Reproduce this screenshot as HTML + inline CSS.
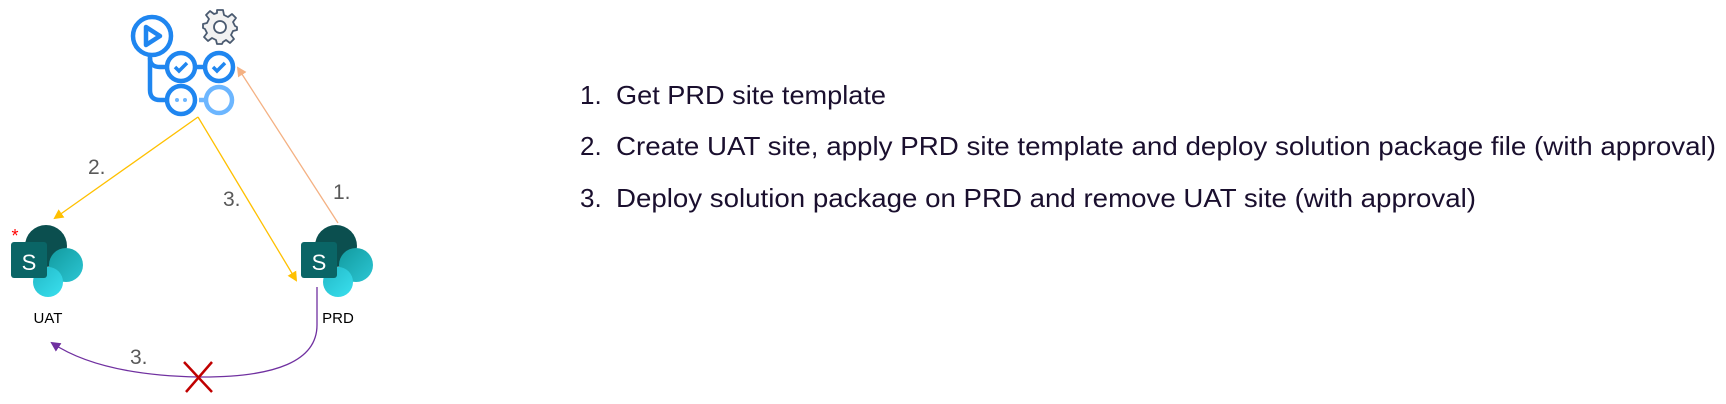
<!DOCTYPE html>
<html><head><meta charset="utf-8"><style>
html,body{margin:0;padding:0;background:#fff;}
svg{display:block}
</style></head><body>
<svg width="1726" height="404" viewBox="0 0 1726 404" xmlns="http://www.w3.org/2000/svg">
<defs>
<marker id="ay" markerWidth="10" markerHeight="10" refX="8" refY="5" orient="auto" markerUnits="userSpaceOnUse"><path d="M0,0 L10,5 L0,10 z" fill="#ffc000"/></marker>
<marker id="ao" markerWidth="10" markerHeight="10" refX="8" refY="5" orient="auto" markerUnits="userSpaceOnUse"><path d="M0,0 L10,5 L0,10 z" fill="#f4b183"/></marker>
<marker id="ap" markerWidth="10" markerHeight="10" refX="8" refY="5" orient="auto" markerUnits="userSpaceOnUse"><path d="M0,0 L10,5 L0,10 z" fill="#7030a0"/></marker>
<linearGradient id="gt" x1="0" y1="0" x2="1" y2="1"><stop offset="0" stop-color="#129a9e"/><stop offset="1" stop-color="#2cc6d4"/></linearGradient>
<linearGradient id="gc" x1="0" y1="0" x2="1" y2="1"><stop offset="0" stop-color="#22b8c6"/><stop offset="1" stop-color="#3ae0ef"/></linearGradient>
</defs>

<g fill="none" stroke="#1f86f0" stroke-width="4.5">
<circle cx="152" cy="36" r="19"/>
<path d="M146 27 L160 36 L146 45 Z" stroke-linejoin="round"/>
<path d="M150 55 V90 Q150 100 160 100 H167"/>
<path d="M150 58 V58 Q150 67 160 67 H167"/>
<circle cx="181" cy="67" r="14"/>
<path d="M175 67 L179 71 L187 63" stroke-width="3.5"/>
<line x1="195" y1="67" x2="205" y2="67"/>
<circle cx="219" cy="67" r="14"/>
<path d="M213 67 L217 71 L225 63" stroke-width="3.5"/>
<circle cx="181" cy="100" r="14"/>
</g>
<circle cx="177" cy="100" r="2" fill="#6cb6ff"/><circle cx="185" cy="100" r="2" fill="#6cb6ff"/>
<g fill="none" stroke="#6cb6ff" stroke-width="4.5"><line x1="199" y1="100" x2="205" y2="100"/><circle cx="219" cy="100" r="13"/></g>
<g transform="translate(220,27)" fill="#f2f2f2" stroke="#4a5a70" stroke-width="1.8">
<path d="M-3,-17 L3,-17 L4,-12 L8,-10 L12,-13 L16,-9 L13,-5 L15,-1 L17,0 L17,3 L13,4 L11,8 L14,12 L10,16 L6,13 L3,15 L2,17 L-3,17 L-4,13 L-8,11 L-12,14 L-16,10 L-13,6 L-15,2 L-17,1 L-17,-3 L-13,-4 L-11,-8 L-14,-12 L-10,-16 L-6,-13 L-3,-14 Z" stroke-linejoin="round"/>
<circle r="6" fill="#fff"/>
</g>

<line x1="198" y1="117" x2="55" y2="218" stroke="#ffc000" stroke-width="1.3" marker-end="url(#ay)"/>
<line x1="198" y1="117" x2="296" y2="280" stroke="#ffc000" stroke-width="1.3" marker-end="url(#ay)"/>
<line x1="338" y1="223" x2="238" y2="68" stroke="#f4b183" stroke-width="1.3" marker-end="url(#ao)"/>
<path d="M317 287 V325 Q317 378 198 377 Q100 375 52 343" fill="none" stroke="#7030a0" stroke-width="1.3" marker-end="url(#ap)"/>
<g stroke="#c00000" stroke-width="2.5"><line x1="184" y1="362" x2="212" y2="392"/><line x1="212" y1="362" x2="186" y2="392"/></g>

<g font-family="Liberation Sans, sans-serif" font-size="21" fill="#595959">
<text x="88" y="174">2.</text>
<text x="223" y="206">3.</text>
<text x="333" y="199">1.</text>
<text x="130" y="364">3.</text>
</g>

<g id="sp">
<circle cx="46" cy="246" r="21" fill="#0b4f4f"/>
<circle cx="66" cy="265" r="17" fill="url(#gt)"/>
<circle cx="48" cy="282" r="15" fill="url(#gc)"/>
<rect x="11" y="242" width="36" height="36" rx="3" fill="#0a6566"/>
<text x="29" y="270" font-family="Liberation Sans, sans-serif" font-size="22" fill="#fff" text-anchor="middle">S</text>
</g>
<use href="#sp" x="290"/>
<text x="15" y="242" font-family="Liberation Sans, sans-serif" font-size="18" fill="#ff0000" text-anchor="middle">*</text>
<g font-family="Liberation Sans, sans-serif" font-size="15" fill="#000" text-anchor="middle">
<text x="48" y="323">UAT</text>
<text x="338" y="323">PRD</text>
</g>

<g font-family="Liberation Sans, sans-serif" font-size="26" fill="#1a0f2e">
<text x="580" y="104">1.</text><text x="616" y="104" textLength="270" lengthAdjust="spacingAndGlyphs">Get PRD site template</text>
<text x="580" y="155">2.</text><text x="616" y="155" textLength="1100" lengthAdjust="spacingAndGlyphs">Create UAT site, apply PRD site template and deploy solution package file (with approval)</text>
<text x="580" y="207">3.</text><text x="616" y="207" textLength="860" lengthAdjust="spacingAndGlyphs">Deploy solution package on PRD and remove UAT site (with approval)</text>
</g>
</svg>
</body></html>
